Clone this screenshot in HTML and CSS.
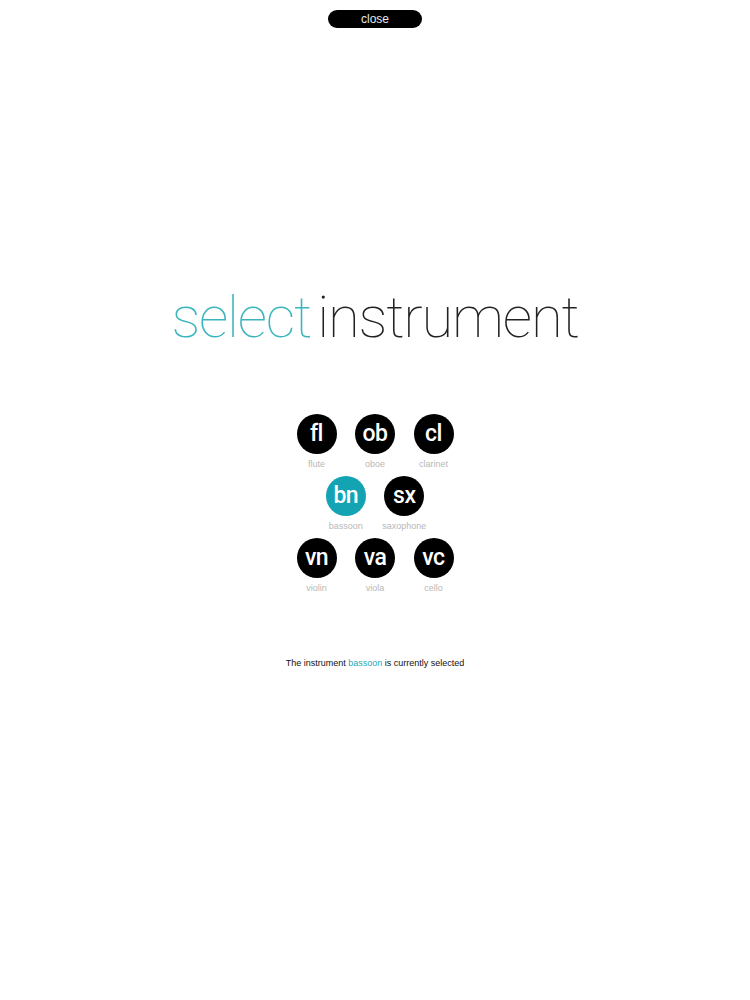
FILE: index.html
```html
<!DOCTYPE html>
<html>
<head>
<meta charset="utf-8">
<link rel="stylesheet" href="styles.css">
</head>
<body>
<div class="page">
  <div class="top"><button class="close">close</button></div>
  <h1 class="title"><span class="accent">select</span><span class="rest">instrument</span></h1>
  <div class="grid">
    <div class="row">
      <div class="item"><div class="circle">fl</div><div class="label">flute</div></div>
      <div class="item"><div class="circle">ob</div><div class="label">oboe</div></div>
      <div class="item"><div class="circle">cl</div><div class="label">clarinet</div></div>
    </div>
    <div class="row">
      <div class="item"><div class="circle active">bn</div><div class="label">bassoon</div></div>
      <div class="item"><div class="circle">sx</div><div class="label">saxophone</div></div>
    </div>
    <div class="row">
      <div class="item"><div class="circle">vn</div><div class="label">violin</div></div>
      <div class="item"><div class="circle">va</div><div class="label">viola</div></div>
      <div class="item"><div class="circle">vc</div><div class="label">cello</div></div>
    </div>
  </div>
  <p class="status">The instrument <span class="accent-text">bassoon</span> is currently selected</p>
</div>
</body>
</html>
```
FILE: styles.css
```css
html, body {
  margin: 0;
  padding: 0;
  background: #ffffff;
}
.page {
  width: 750px;
  height: 1000px;
  display: flex;
  flex-direction: column;
  align-items: center;
  font-family: "Liberation Sans", Arial, sans-serif;
}
.top {
  margin-top: 10px;
  display: flex;
  justify-content: center;
}
.close {
  width: 94px;
  height: 18px;
  border: none;
  border-radius: 9px;
  background: #000;
  color: #e8e8e8;
  font-family: "Liberation Sans", Arial, sans-serif;
  font-size: 12px;
  line-height: 18px;
  padding: 0;
}
.title {
  margin: 259px 0 0 0;
  font-family: Roboto, "Noto Sans", sans-serif;
  font-weight: 100;
  font-size: 58px;
  line-height: 61px;
  letter-spacing: -1.2px;
  display: flex;
  gap: 6px;
}
.accent { color: #3bb5bd; }
.rest { color: #222; }
.grid {
  margin-top: 66px;
  display: flex;
  flex-direction: column;
  align-items: center;
}
.row {
  display: flex;
  justify-content: center;
}
.item {
  width: 58.5px;
  height: 62px;
  display: flex;
  flex-direction: column;
  align-items: center;
}
.circle {
  width: 40px;
  height: 40px;
  border-radius: 50%;
  background: #000;
  color: #fff;
  display: flex;
  align-items: center;
  justify-content: center;
  font-family: Roboto, "Liberation Sans", Arial, sans-serif;
  font-weight: 500;
  font-size: 23px;
  letter-spacing: -0.5px;
  line-height: 1;
  padding-bottom: 1px;
  box-sizing: border-box;
}
.circle.active { background: #14a3b3; }
.label {
  margin-top: 5px;
  font-size: 9px;
  line-height: 11px;
  color: #b8b8b8;
}
.status {
  margin: 57px 0 0 0;
  font-size: 9px;
  line-height: 12px;
  color: #111;
}
.accent-text { color: #27a9b5; }
```
